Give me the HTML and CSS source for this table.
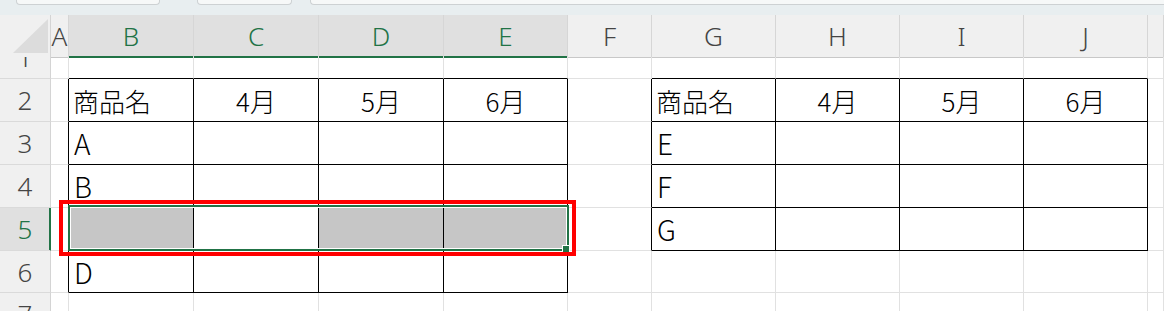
FILE: index.html
```html
<!DOCTYPE html>
<html lang="ja">
  <head>
    <meta charset="UTF-8" />
    <title>Book1 - Excel</title>
    <link rel="stylesheet" href="styles.css">
  </head>
  <body>
    <div class="topbar">
      <span class="seg seg-1"></span>
      <span class="seg seg-2"></span>
      <span class="seg seg-3"></span>
    </div>

    <div class="sheet">
      <!-- column headers -->
      <div class="row hdr">
        <div class="corner">
          <svg width="51" height="42" viewBox="0 0 51 42"><polygon points="13,38 48,38 48,4" fill="#dcdcdc" /></svg>
        </div>
        <div class="ch">A</div>
        <div class="ch sel">B</div>
        <div class="ch sel">C</div>
        <div class="ch sel">D</div>
        <div class="ch sel">E</div>
        <div class="ch">F</div>
        <div class="ch">G</div>
        <div class="ch">H</div>
        <div class="ch">I</div>
        <div class="ch">J</div>
        <div class="ch"></div>
      </div>

      <!-- row 1 (scrolled, only the bottom shows) -->
      <div class="row r1">
        <div class="rh"><span>1</span></div>
        <div class="c"></div>
        <div class="c bb"></div>
        <div class="c bb"></div>
        <div class="c bb"></div>
        <div class="c bb"></div>
        <div class="c"></div>
        <div class="c bb"></div>
        <div class="c bb"></div>
        <div class="c bb"></div>
        <div class="c bb"></div>
        <div class="c"></div>
      </div>

      <div class="row">
        <div class="rh"><span>2</span></div>
        <div class="c br"></div>
        <div class="c b">商品名</div>
        <div class="c b ctr">4月</div>
        <div class="c b ctr">5月</div>
        <div class="c b ctr">6月</div>
        <div class="c br"></div>
        <div class="c b">商品名</div>
        <div class="c b ctr">4月</div>
        <div class="c b ctr">5月</div>
        <div class="c b ctr">6月</div>
        <div class="c"></div>
      </div>

      <div class="row">
        <div class="rh"><span>3</span></div>
        <div class="c br"></div>
        <div class="c b lat">A</div>
        <div class="c b"></div>
        <div class="c b"></div>
        <div class="c b"></div>
        <div class="c br"></div>
        <div class="c b lat">E</div>
        <div class="c b"></div>
        <div class="c b"></div>
        <div class="c b"></div>
        <div class="c"></div>
      </div>

      <div class="row">
        <div class="rh"><span>4</span></div>
        <div class="c br"></div>
        <div class="c b lat">B</div>
        <div class="c b"></div>
        <div class="c b"></div>
        <div class="c b"></div>
        <div class="c br"></div>
        <div class="c b lat">F</div>
        <div class="c b"></div>
        <div class="c b"></div>
        <div class="c b"></div>
        <div class="c"></div>
      </div>

      <div class="row">
        <div class="rh sel"><span>5</span></div>
        <div class="c br"></div>
        <div class="c b fill"></div>
        <div class="c b"></div>
        <div class="c b fill"></div>
        <div class="c b fill"></div>
        <div class="c br"></div>
        <div class="c b lat">G</div>
        <div class="c b"></div>
        <div class="c b"></div>
        <div class="c b"></div>
        <div class="c"></div>
      </div>

      <div class="row r6">
        <div class="rh"><span>6</span></div>
        <div class="c br"></div>
        <div class="c b lat">D</div>
        <div class="c b"></div>
        <div class="c b"></div>
        <div class="c b"></div>
        <div class="c"></div>
        <div class="c"></div>
        <div class="c"></div>
        <div class="c"></div>
        <div class="c"></div>
        <div class="c"></div>
      </div>

      <!-- row 7 (cut off by the window) -->
      <div class="row r7">
        <div class="rh"><span>7</span></div>
        <div class="c"></div>
        <div class="c"></div>
        <div class="c"></div>
        <div class="c"></div>
        <div class="c"></div>
        <div class="c"></div>
        <div class="c"></div>
        <div class="c"></div>
        <div class="c"></div>
        <div class="c"></div>
        <div class="c"></div>
      </div>

      <!-- active range B5:E5 with fill handle -->
      <div class="selection"><span class="handle"></span></div>
      <!-- red callout box -->
      <div class="callout"></div>
    </div>
  </body>
</html>
```

FILE: styles.css
```css
/* --- Reset & base --- */
*, *::before, *::after {
  box-sizing: border-box;
  margin: 0;
  padding: 0;
}
body {
  width: 1164px;
  height: 311px;
  overflow: hidden;
  background: #fff;
  color: #000;
  font-family: "Noto Sans CJK JP", sans-serif;
}

/* --- Strip above the grid --- */
.topbar {
  height: 15px;
  background: #e8eef0;
  display: flex;
  align-items: flex-start;
}
.seg {
  height: 5px;
  background: #f6f8f8;
  border: 1px solid #cdd1d3;
  border-top: none;
  border-radius: 0 0 4px 4px;
}
.seg-1 { margin-left: 16px; width: 144px; }
.seg-2 { margin-left: 37px; width: 95px; }
.seg-3 { margin-left: 18px; flex: 1; border-right: none; border-radius: 0 0 0 4px; }

/* --- Grid --- */
.sheet {
  position: relative;
}
.row {
  display: grid;
  grid-template-columns: 51px 18px 125px 125px 125px 124px 84px 124px 124px 124px 124px 1fr;
  height: 43px;
}
.row.hdr { height: 42px; }
.row.r1 { height: 22px; }
.row.r6 { height: 42px; }
.row.r7 { height: 20px; }

/* column headers */
.corner {
  background: #f0f0f0;
  border-right: 1px solid #d4d4d4;
  border-bottom: 1px solid #c8c8c8;
}
.corner svg { display: block; }
.ch {
  display: flex;
  align-items: center;
  justify-content: center;
  overflow: hidden;
  background: #f0f0f0;
  border-right: 1px solid #d6d6d6;
  border-bottom: 1px solid #c8c8c8;
  font-family: "Noto Sans", sans-serif;
  font-weight: 300;
  font-size: 26px;
  color: #444;
}
.ch.sel {
  background: #e0e0e0;
  color: #217346;
  border-bottom-color: #217346;
  box-shadow: inset 0 -1px #217346;
}

/* row headers */
.rh {
  display: flex;
  align-items: center;
  justify-content: center;
  overflow: hidden;
  background: #f0f0f0;
  border-right: 1px solid #d4d4d4;
  border-bottom: 1px solid #dadada;
  font-family: "Noto Sans", sans-serif;
  font-weight: 300;
  font-size: 26px;
  color: #444;
}
.rh span {
  line-height: 42px;
  flex: none;
}
.r1 .rh { align-items: flex-end; }
.r7 .rh { align-items: flex-start; }
.rh.sel {
  background: #e0e0e0;
  color: #217346;
  border-right-color: #217346;
  box-shadow: inset -1px 0 #217346;
}

/* cells */
.c {
  display: flex;
  align-items: center;
  padding: 0 4px;
  overflow: hidden;
  white-space: nowrap;
  font-size: 26px;
  font-weight: 300;
  border-right: 1px solid #e1e1e1;
  border-bottom: 1px solid #e1e1e1;
}
.c.ctr { justify-content: center; }
.c.lat { font-size: 28px; padding-left: 5px; }
.c.b {
  border-right-color: #000;
  border-bottom-color: #000;
}
.c.bb { border-bottom-color: #000; }
.c.br { border-right-color: #000; }
.c.fill { background: #c6c6c6; }

/* --- Overlays --- */
.selection {
  position: absolute;
  left: 68px;
  top: 190px;
  width: 501px;
  height: 46px;
  border: 2px solid #217346;
  box-shadow: inset 0 0 0 1px #fff;
}
.handle {
  position: absolute;
  right: -3px;
  bottom: -4px;
  width: 8px;
  height: 8px;
  background: #217346;
  border: 1px solid #fff;
}
.callout {
  position: absolute;
  left: 59px;
  top: 185px;
  width: 517px;
  height: 56px;
  border: 4px solid #ff0000;
}
```
